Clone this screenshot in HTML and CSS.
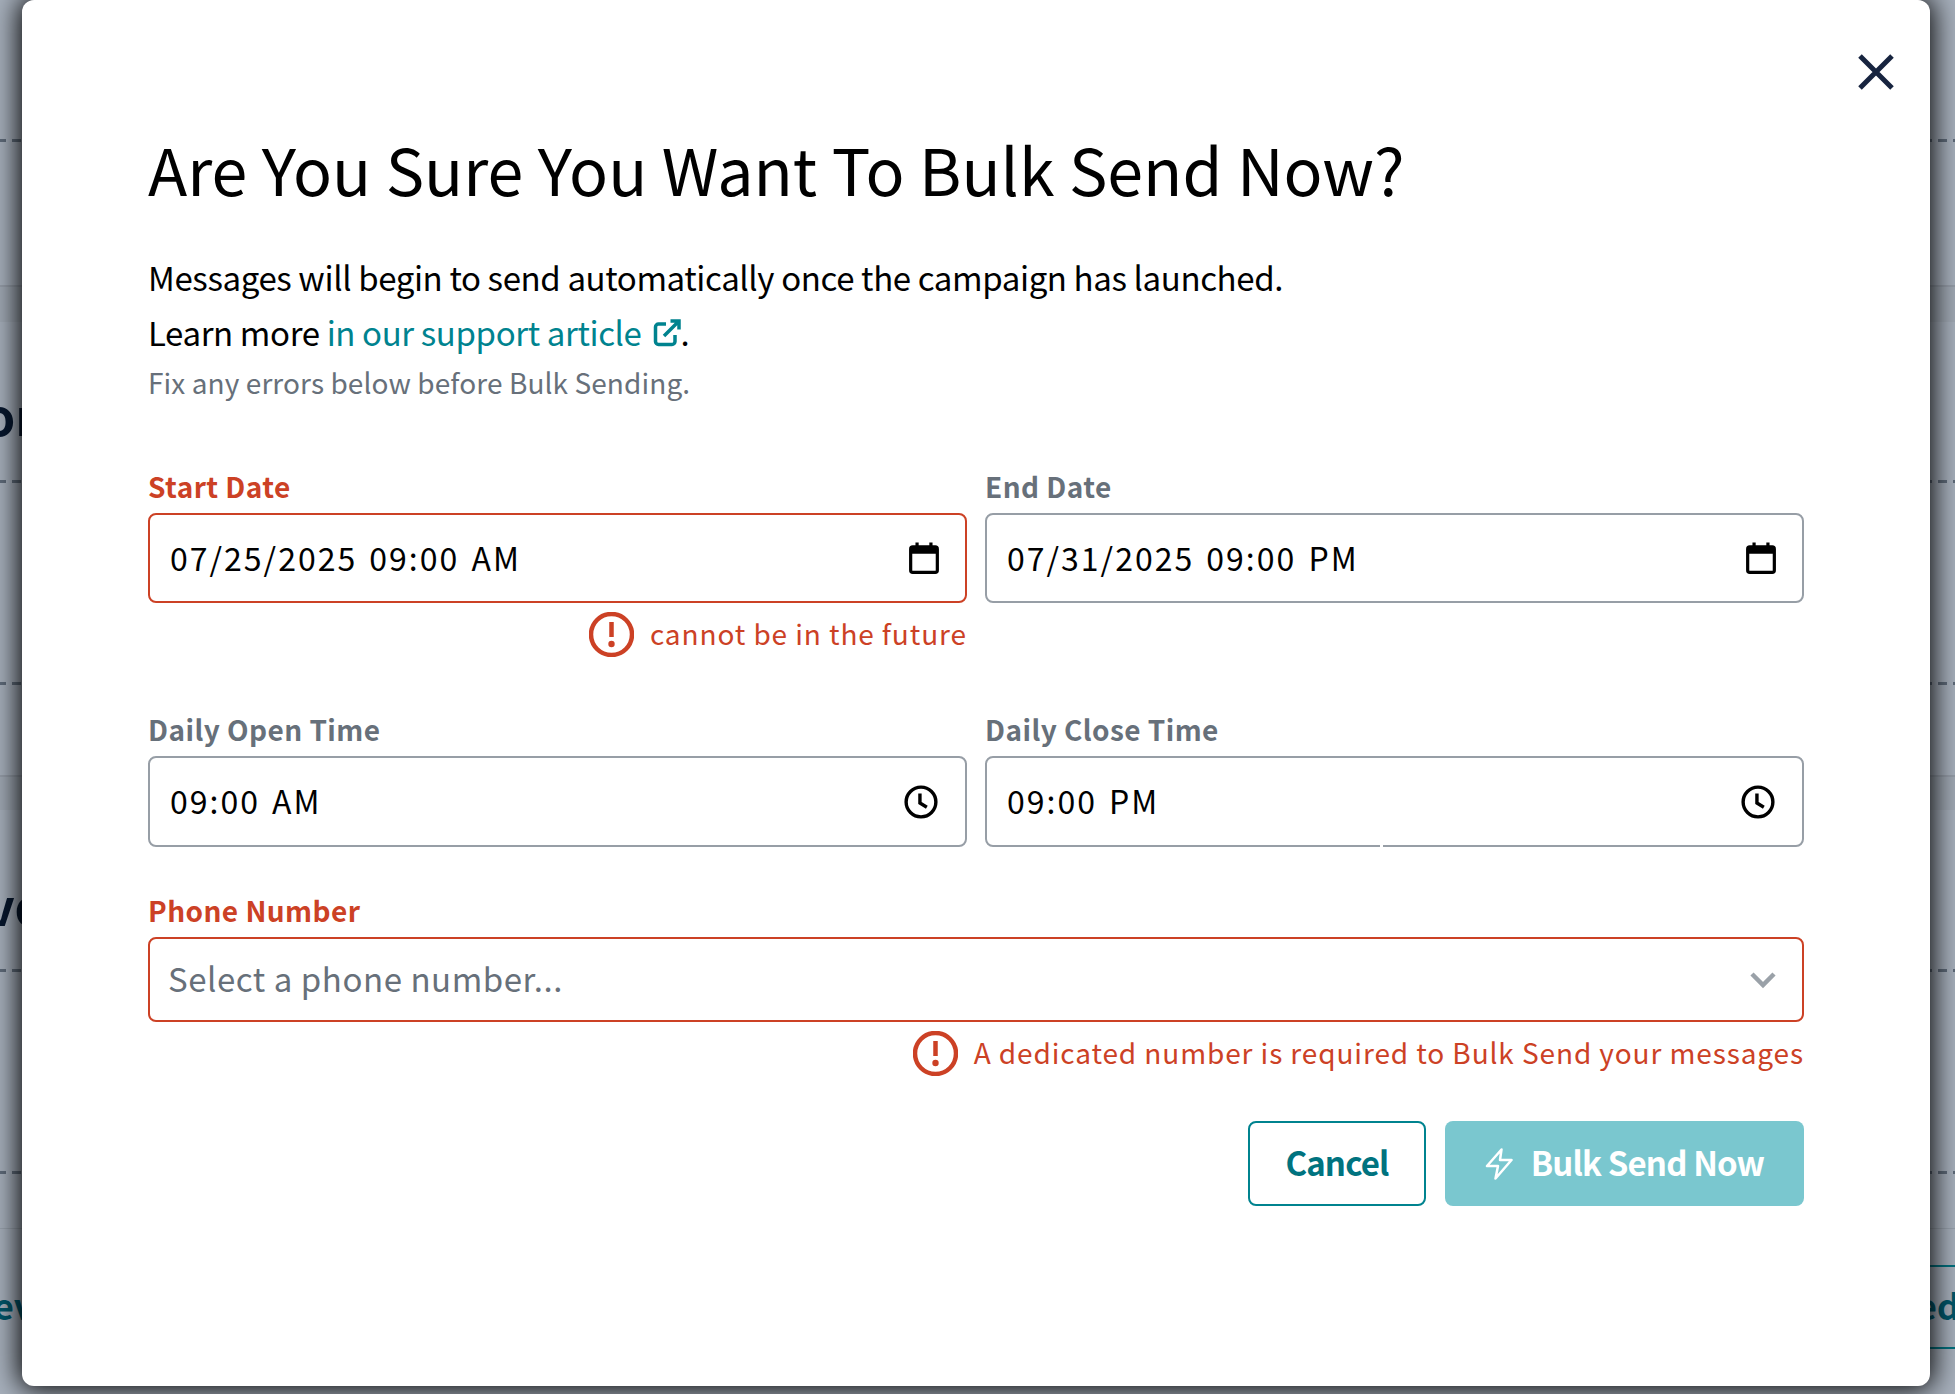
FILE: index.html
```html
<!DOCTYPE html>
<html lang="en">
<head>
  <meta charset="UTF-8">
  <meta name="viewport" content="width=device-width, initial-scale=1.0">
  <title>Bulk Send</title>
  <link rel="stylesheet" href="styles.css">
</head>

<body>
  <!-- Page behind the dialog, only its edges show -->
  <div class="page">
    <div class="row row-1"></div>
    <div class="band"></div>
    <div class="row row-2"><span class="heading heading-or">or</span></div>
    <div class="row row-3"></div>
    <div class="band band-2"></div>
    <div class="row row-5"><span class="heading heading-ve">ve</span></div>
    <div class="row row-6"></div>
    <div class="row-7">
      <span class="link-text">ev</span>
      <span class="outline-btn">ed</span>
    </div>
  </div>

  <div class="modal">
    <button class="close" aria-label="Close">
      <svg viewBox="0 0 36 36"><path d="M2 2L34 34M34 2L2 34" /></svg>
    </button>

    <h1 class="title">Are You Sure You Want To Bulk Send Now?</h1>

    <p class="intro">Messages will begin to send automatically once the campaign has launched.</p>
    <p class="intro">Learn more <a href="#" class="support-link">in our support article
      <svg class="external" viewBox="0 0 28 28"><path d="M13 5H5.500A3 3 0 0 0 2.500 8V22.500A3 3 0 0 0 5.500 25.500H19A3 3 0 0 0 22 22.500V16" /><path d="M11 17L26 2M17.500 2H26V10.500" /></svg></a>.</p>
    <p class="hint">Fix any errors below before Bulk Sending.</p>

    <form class="fields">
      <div class="field-row row-dates">
        <div class="field has-error">
          <label class="label">Start Date</label>
          <div class="input">
            <span class="value">07/25/2025 09:00 AM</span>
            <svg class="icon-calendar" viewBox="0 0 28 30"><rect x="1.500" y="4.500" width="25" height="24" rx="2" /><path class="fill" d="M1.500 4h25v7h-25zM6 0.500h3V5H6zM19 0.500h3V5h-3z" /></svg>
          </div>
          <div class="error">
            <svg class="icon-error" viewBox="0 0 45 45"><circle cx="22.500" cy="22.500" r="20.500" /><path d="M22.500 10V25" /><circle class="dot" cx="22.500" cy="32" r="3.200" /></svg>
            cannot be in the future
          </div>
        </div>
        <div class="field">
          <label class="label">End Date</label>
          <div class="input">
            <span class="value">07/31/2025 09:00 PM</span>
            <svg class="icon-calendar" viewBox="0 0 28 30"><rect x="1.500" y="4.500" width="25" height="24" rx="2" /><path class="fill" d="M1.500 4h25v7h-25zM6 0.500h3V5H6zM19 0.500h3V5h-3z" /></svg>
          </div>
        </div>
      </div>

      <div class="field-row row-times">
        <div class="field">
          <label class="label">Daily Open Time</label>
          <div class="input input-time">
            <span class="value">09:00 AM</span>
            <svg class="icon-clock" viewBox="0 0 32 32"><circle cx="16" cy="16" r="14" /><path d="M15 8V17L21.500 21" /></svg>
          </div>
        </div>
        <div class="field">
          <label class="label">Daily Close Time</label>
          <div class="input input-time notched">
            <span class="value">09:00 PM</span>
            <svg class="icon-clock" viewBox="0 0 32 32"><circle cx="16" cy="16" r="14" /><path d="M15 8V17L21.500 21" /></svg>
          </div>
        </div>
      </div>

      <div class="field has-error">
        <label class="label">Phone Number</label>
        <div class="input select">
          <span class="value">Select a phone number...</span>
          <svg class="icon-chevron" viewBox="0 0 26 18"><path d="M2 3L13 14L24 3" /></svg>
        </div>
        <div class="error">
          <svg class="icon-error" viewBox="0 0 45 45"><circle cx="22.500" cy="22.500" r="20.500" /><path d="M22.500 10V25" /><circle class="dot" cx="22.500" cy="32" r="3.200" /></svg>
          A dedicated number is required to Bulk Send your messages
        </div>
      </div>

      <div class="actions">
        <button type="button" class="btn btn-cancel">Cancel</button>
        <button type="button" class="btn btn-send">
          <svg class="icon-bolt" viewBox="0 0 28 32"><path d="M16.500 1.500L2 18H13L10.500 30.500L26.500 12H15Z" /></svg>
          Bulk Send Now
        </button>
      </div>
    </form>
  </div>
</body>
</html>
```

FILE: styles.css
```css
/* Base styles */
* {
  box-sizing: border-box;
}

html,
body {
  margin: 0;
  height: 100%;
  overflow: hidden;
}

body {
  position: relative;
  font-family: "Noto Sans CJK JP", "Noto Sans", sans-serif;
  background: #a7b0bc;
  color: #000;
}

/* Dimmed page behind the dialog */
.page {
  display: flex;
  flex-direction: column;
  height: 100%;
  overflow: hidden;
}

.row {
  flex: none;
  border-bottom: 3px solid transparent;
  border-image: repeating-linear-gradient(90deg, #5f6b7a 0 9px, transparent 9px 15px) 3;
}

.row-1 { height: 142px; }
.row-2 { height: 161px; display: flex; align-items: center; padding-top: 26px; }
.row-3 { height: 202px; }
.row-5 { height: 162px; display: flex; align-items: center; padding-top: 28px; }
.row-6 { height: 202px; }

.row-7 {
  flex: 1;
  display: flex;
  justify-content: space-between;
  align-items: center;
  margin-top: 54px;
  padding-bottom: 10px;
  border-top: 1px solid #98a1ac;
  font-size: 36px;
  font-weight: 700;
  color: #00566a;
}

.band {
  flex: none;
  height: 37px;
  margin-top: 143px;
  background: #a0a9b4;
  border-top: 2px solid #959da8;
}

.band-2 {
  margin-top: 90px;
  height: 35px;
}

.heading {
  font-size: 50px;
  font-weight: 700;
  line-height: 1;
  color: #07172e;
}

.heading-or { margin-left: -16px; }
.heading-ve { margin-left: -14px; }

.link-text {
  margin-left: -7px;
  padding-bottom: 6px;
}

.outline-btn {
  display: flex;
  align-items: center;
  height: 84px;
  margin-right: -5px;
  padding: 0 0 6px 4px;
  border-top: 2px solid #00707e;
  border-bottom: 2px solid #00707e;
}

/* Dialog */
.modal {
  position: absolute;
  top: 0;
  left: 22px;
  width: 1908px;
  height: 1386px;
  padding: 122px 126px 0;
  background: #fff;
  border-radius: 12px;
  box-shadow: 0 0 28px 3px #000;
}

.close {
  all: unset;
  position: absolute;
  top: 54px;
  right: 36px;
  width: 36px;
  height: 36px;
  cursor: pointer;
}

.close svg {
  display: block;
  width: 36px;
  height: 36px;
  fill: none;
  stroke: #17243f;
  stroke-width: 5;
}

.title {
  margin: 0 0 36px;
  font-size: 64.500px;
  font-weight: 400;
  line-height: 92px;
}

.intro {
  margin: 0;
  font-size: 33px;
  line-height: 55px;
  letter-spacing: -0.380px;
}

.support-link {
  color: #00838f;
  text-decoration: none;
}

.external {
  width: 28px;
  height: 28px;
  fill: none;
  stroke: #00838f;
  stroke-width: 3.500;
  vertical-align: -1px;
  margin-left: 4px;
}

.hint {
  margin: 0;
  font-size: 28px;
  line-height: 45px;
  letter-spacing: 0.090px;
  color: #67707a;
}

/* Form */
.fields {
  margin-top: 60px;
}

.field-row {
  display: grid;
  grid-template-columns: 1fr 1fr;
  column-gap: 18px;
}

.row-dates {
  height: 243px;
}

.row-times {
  height: 181px;
}

.label {
  display: block;
  height: 48px;
  font-size: 28px;
  font-weight: 700;
  line-height: 42px;
  letter-spacing: 0.450px;
  color: #67707a;
}

.has-error .label {
  color: #cc4125;
}

.input {
  display: flex;
  justify-content: space-between;
  align-items: center;
  height: 90px;
  padding: 0 26px 0 20px;
  border: 2px solid #979ea6;
  border-radius: 8px;
  font-size: 32px;
  letter-spacing: 2px;
  word-spacing: 3px;
}

.value {
  padding-bottom: 3px;
}

.has-error .input {
  border-color: #cc4125;
}

.input-time {
  height: 91px;
  padding-right: 27px;
}

/* Small gap in the bottom border of the close time box */
.notched {
  position: relative;
}

.notched::after {
  content: "";
  position: absolute;
  left: 393px;
  bottom: -2px;
  width: 3px;
  height: 2px;
  background: #fff;
}

.select {
  height: 85px;
  padding-left: 18px;
  font-size: 33px;
  letter-spacing: 0.550px;
  word-spacing: 0;
  color: #67707a;
}

.icon-calendar {
  width: 30px;
  height: 32px;
  fill: none;
  stroke: #000;
  stroke-width: 3;
}

.icon-calendar .fill {
  fill: #000;
  stroke: none;
}

.icon-clock {
  width: 34px;
  height: 34px;
  fill: none;
  stroke: #000;
  stroke-width: 3.200;
}

.icon-chevron {
  width: 26px;
  height: 18px;
  fill: none;
  stroke: #9aa1a8;
  stroke-width: 4.500;
}

.error {
  display: flex;
  justify-content: flex-end;
  align-items: center;
  gap: 16px;
  height: 59px;
  font-size: 28px;
  letter-spacing: 0.900px;
  color: #cc4125;
}

.icon-error {
  width: 45px;
  height: 45px;
  margin-top: 4px;
  fill: none;
  stroke: #cc4125;
  stroke-width: 4.500;
}

.icon-error .dot {
  fill: #cc4125;
  stroke: none;
}

.actions {
  display: flex;
  justify-content: flex-end;
  gap: 19px;
  margin-top: 40px;
}

.btn {
  all: unset;
  box-sizing: border-box;
  display: flex;
  justify-content: center;
  align-items: center;
  gap: 18px;
  height: 85px;
  padding-bottom: 3px;
  border-radius: 8px;
  font-size: 33px;
  font-weight: 700;
  letter-spacing: -0.850px;
  cursor: pointer;
}

.btn-cancel {
  width: 178px;
  border: 2px solid #00838f;
  color: #00737f;
}

.btn-send {
  width: 359px;
  background: #7ac7cf;
  color: #fff;
}

.icon-bolt {
  width: 28px;
  height: 32px;
  margin-top: 3px;
  fill: none;
  stroke: #fff;
  stroke-width: 2.500;
  stroke-linejoin: round;
}
```
